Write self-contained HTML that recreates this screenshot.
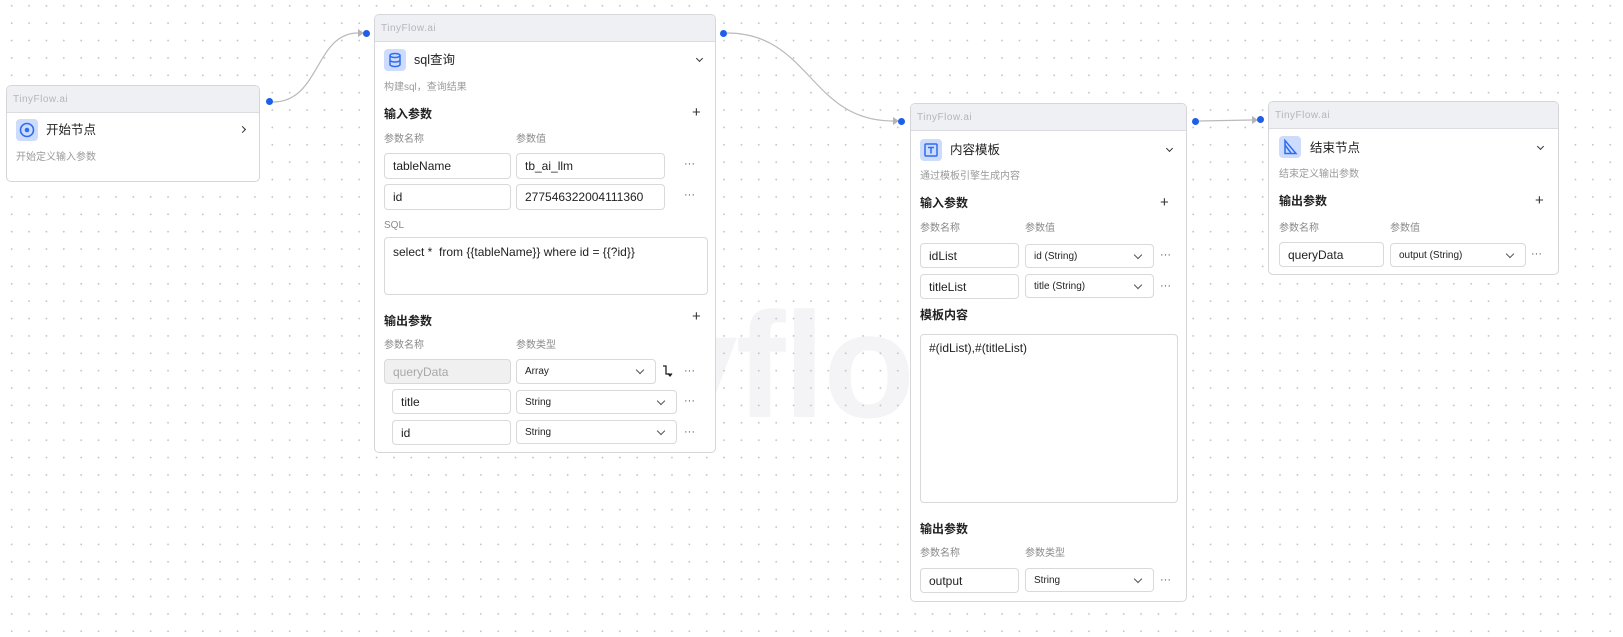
<!DOCTYPE html>
<html><head><meta charset="utf-8">
<style>
*{box-sizing:border-box;margin:0;padding:0}
body{width:1623px;height:637px;overflow:hidden;position:relative;background:#fff;
font-family:"Liberation Sans","Noto Sans CJK SC",sans-serif;color:#222}
.grid{position:absolute;left:0;top:0;width:1623px;height:637px;
background-image:radial-gradient(circle,#c4c4c8 0.8px,transparent 1.1px);
background-size:17.38px 17.38px;background-position:3px -2.9px}
.wm{position:absolute;left:438px;top:290px;font:bold 150px/1 "Liberation Sans",sans-serif;color:#f4f4f6;letter-spacing:-2px;white-space:nowrap}
.node{position:absolute;background:#fff;border:1px solid #d6d6da;border-radius:5px;overflow:hidden}
.hd{position:absolute;left:0;top:0;right:0;height:27px;background:#eff0f4;border-bottom:1px solid #dcdce0;font-size:10px;color:#b5b5bb;padding:8px 0 0 6px;letter-spacing:.5px}
.t{position:absolute;white-space:nowrap;line-height:16px;height:16px}
.ic{position:absolute;width:22px;height:22px;border-radius:4px;background:#cddcfd}
.title{font-size:12.5px;color:#222}
.desc{font-size:10px;color:#9a9a9a}
.sec{font-size:12px;font-weight:bold;color:#222}
.lab{font-size:10px;color:#8a8a8a}
.in{position:absolute;border:1px solid #d9d9dc;border-radius:4px;background:#fff;font-size:12px;padding-left:8px;line-height:25px;color:#222}
.sel{position:absolute;border:1px solid #d9d9dc;border-radius:4px;background:#fff;font-size:10px;padding-left:8px;line-height:23px;color:#222}
.sel:after{content:"";position:absolute;right:12px;top:7px;width:5px;height:5px;border-right:1px solid #555;border-bottom:1px solid #555;transform:rotate(45deg)}
.dots{font-size:11px;color:#555}
.plus{font-size:15px;color:#333}
.chev{position:absolute;width:5px;height:5px;border-right:1.3px solid #333;border-bottom:1.3px solid #333;transform:rotate(45deg)}
.h{position:absolute;width:7px;height:7px;border-radius:50%;background:#1f5ee8}
</style></head><body>
<div class="wm">Tinyflow.ai</div>
<div class="grid"></div>

<svg style="position:absolute;left:0;top:0" width="1623" height="637">
<g fill="none" stroke="#b9b9be" stroke-width="1.2">
<path d="M273 102 C 320 102, 315 33, 358 33"/>
<path d="M727 33 C 810 33, 810 121, 893 121"/>
<path d="M1199 121 L1252 120"/>
</g>
<g fill="#b3b3b8">
<path d="M358 29 L364 33 L358 37Z"/>
<path d="M893 117 L899 121 L893 125Z"/>
<path d="M1252 116 L1258 120 L1252 124Z"/>
</g>
</svg>
<div class="h" style="left:266px;top:98px"></div>
<div class="h" style="left:363px;top:30px"></div>
<div class="h" style="left:720px;top:30px"></div>
<div class="h" style="left:898px;top:118px"></div>
<div class="h" style="left:1192px;top:118px"></div>
<div class="h" style="left:1257px;top:116px"></div>

<!-- Node 1 -->
<div class="node" style="left:6px;top:85px;width:254px;height:97px">
<div class="hd">TinyFlow.ai</div>
</div>
<div class="ic" style="left:16px;top:119px"><svg width="22" height="22"><circle cx="11" cy="11" r="6.5" fill="none" stroke="#2e6cf0" stroke-width="1.6"/><circle cx="11" cy="11" r="2.3" fill="#2e6cf0"/></svg></div>
<div class="t title" style="left:46px;top:122px">开始节点</div>
<div class="chev" style="left:240px;top:127px;transform:rotate(-45deg)"></div>
<div class="t desc" style="left:16px;top:150px">开始定义输入参数</div>

<!-- Node 2 -->
<div class="node" style="left:374px;top:14px;width:342px;height:439px">
<div class="hd">TinyFlow.ai</div>
</div>
<div class="ic" style="left:384px;top:49px"><svg width="22" height="22" fill="none" stroke="#2e6cf0" stroke-width="1.5"><ellipse cx="11" cy="6.5" rx="5" ry="2"/><path d="M6 6.5v9c0 1.1 2.2 2 5 2s5-.9 5-2v-9M6 11c0 1.1 2.2 2 5 2s5-.9 5-2"/></svg></div>
<div class="t title" style="left:414px;top:52px">sql查询</div>
<div class="chev" style="left:697px;top:56px"></div>
<div class="t desc" style="left:384px;top:80px">构建sql，查询结果</div>
<div class="t sec" style="left:384px;top:106px">输入参数</div>
<div class="t plus" style="left:692px;top:105px">+</div>
<div class="t lab" style="left:384px;top:132px">参数名称</div>
<div class="t lab" style="left:516px;top:132px">参数值</div>
<div class="in" style="left:384px;top:153px;width:127px;height:26px">tableName</div>
<div class="in" style="left:516px;top:153px;width:149px;height:26px">tb_ai_llm</div>
<div class="t dots" style="left:684px;top:156px">···</div>
<div class="in" style="left:384px;top:184px;width:127px;height:26px">id</div>
<div class="in" style="left:516px;top:184px;width:149px;height:26px">277546322004111360</div>
<div class="t dots" style="left:684px;top:187px">···</div>
<div class="t lab" style="left:384px;top:218px">SQL</div>
<div class="in" style="left:384px;top:237px;width:324px;height:58px;line-height:28px;padding-left:8px">select *&nbsp; from {{tableName}} where id = {{?id}}</div>
<div class="t sec" style="left:384px;top:313px">输出参数</div>
<div class="t plus" style="left:692px;top:309px">+</div>
<div class="t lab" style="left:384px;top:338px">参数名称</div>
<div class="t lab" style="left:516px;top:338px">参数类型</div>
<div class="in" style="left:384px;top:359px;width:127px;height:25px;background:#f0f0f0;color:#a8a8a8;line-height:24px">queryData</div>
<div class="sel" style="left:516px;top:359px;width:140px;height:25px">Array</div>
<svg style="position:absolute;left:662px;top:364px" width="12" height="14" fill="none" stroke="#222" stroke-width="1.3"><path d="M1 2h3v8h4v2"/><path d="M6 9.5l2 2.5 2-2.5"/></svg>
<div class="t dots" style="left:684px;top:363px">···</div>
<div class="in" style="left:392px;top:389px;width:119px;height:25px;line-height:24px">title</div>
<div class="sel" style="left:516px;top:390px;width:161px;height:24px">String</div>
<div class="t dots" style="left:684px;top:393px">···</div>
<div class="in" style="left:392px;top:420px;width:119px;height:25px;line-height:24px">id</div>
<div class="sel" style="left:516px;top:420px;width:161px;height:24px">String</div>
<div class="t dots" style="left:684px;top:424px">···</div>

<!-- Node 3 -->
<div class="node" style="left:910px;top:103px;width:277px;height:499px">
<div class="hd">TinyFlow.ai</div>
</div>
<div class="ic" style="left:920px;top:139px"><svg width="22" height="22" fill="none" stroke="#2e6cf0" stroke-width="1.5"><rect x="5" y="5" width="12" height="12" rx="1"/><path d="M8 8.5h6M11 8.5v6"/></svg></div>
<div class="t title" style="left:950px;top:142px">内容模板</div>
<div class="chev" style="left:1167px;top:146px"></div>
<div class="t desc" style="left:920px;top:169px">通过模板引擎生成内容</div>
<div class="t sec" style="left:920px;top:195px">输入参数</div>
<div class="t plus" style="left:1160px;top:195px">+</div>
<div class="t lab" style="left:920px;top:221px">参数名称</div>
<div class="t lab" style="left:1025px;top:221px">参数值</div>
<div class="in" style="left:920px;top:243px;width:99px;height:25px;line-height:24px">idList</div>
<div class="sel" style="left:1025px;top:244px;width:129px;height:24px">id (String)</div>
<div class="t dots" style="left:1160px;top:247px">···</div>
<div class="in" style="left:920px;top:274px;width:99px;height:25px;line-height:24px">titleList</div>
<div class="sel" style="left:1025px;top:274px;width:129px;height:24px">title (String)</div>
<div class="t dots" style="left:1160px;top:278px">···</div>
<div class="t sec" style="left:920px;top:307px">模板内容</div>
<div class="in" style="left:920px;top:334px;width:258px;height:169px;line-height:26px">#(idList),#(titleList)</div>
<div class="t sec" style="left:920px;top:521px">输出参数</div>
<div class="t lab" style="left:920px;top:546px">参数名称</div>
<div class="t lab" style="left:1025px;top:546px">参数类型</div>
<div class="in" style="left:920px;top:568px;width:99px;height:25px;line-height:24px">output</div>
<div class="sel" style="left:1025px;top:568px;width:129px;height:24px">String</div>
<div class="t dots" style="left:1160px;top:572px">···</div>

<!-- Node 4 -->
<div class="node" style="left:1268px;top:101px;width:291px;height:174px">
<div class="hd">TinyFlow.ai</div>
</div>
<div class="ic" style="left:1279px;top:136px"><svg width="22" height="22" fill="none" stroke="#2e6cf0" stroke-width="1.5"><path d="M6 4.5v13h11z"/><path d="M6 9l6 8"/></svg></div>
<div class="t title" style="left:1310px;top:140px">结束节点</div>
<div class="chev" style="left:1538px;top:144px"></div>
<div class="t desc" style="left:1279px;top:167px">结束定义输出参数</div>
<div class="t sec" style="left:1279px;top:193px">输出参数</div>
<div class="t plus" style="left:1535px;top:193px">+</div>
<div class="t lab" style="left:1279px;top:221px">参数名称</div>
<div class="t lab" style="left:1390px;top:221px">参数值</div>
<div class="in" style="left:1279px;top:242px;width:105px;height:25px;line-height:24px">queryData</div>
<div class="sel" style="left:1390px;top:243px;width:136px;height:24px">output (String)</div>
<div class="t dots" style="left:1531px;top:246px">···</div>
</body></html>
